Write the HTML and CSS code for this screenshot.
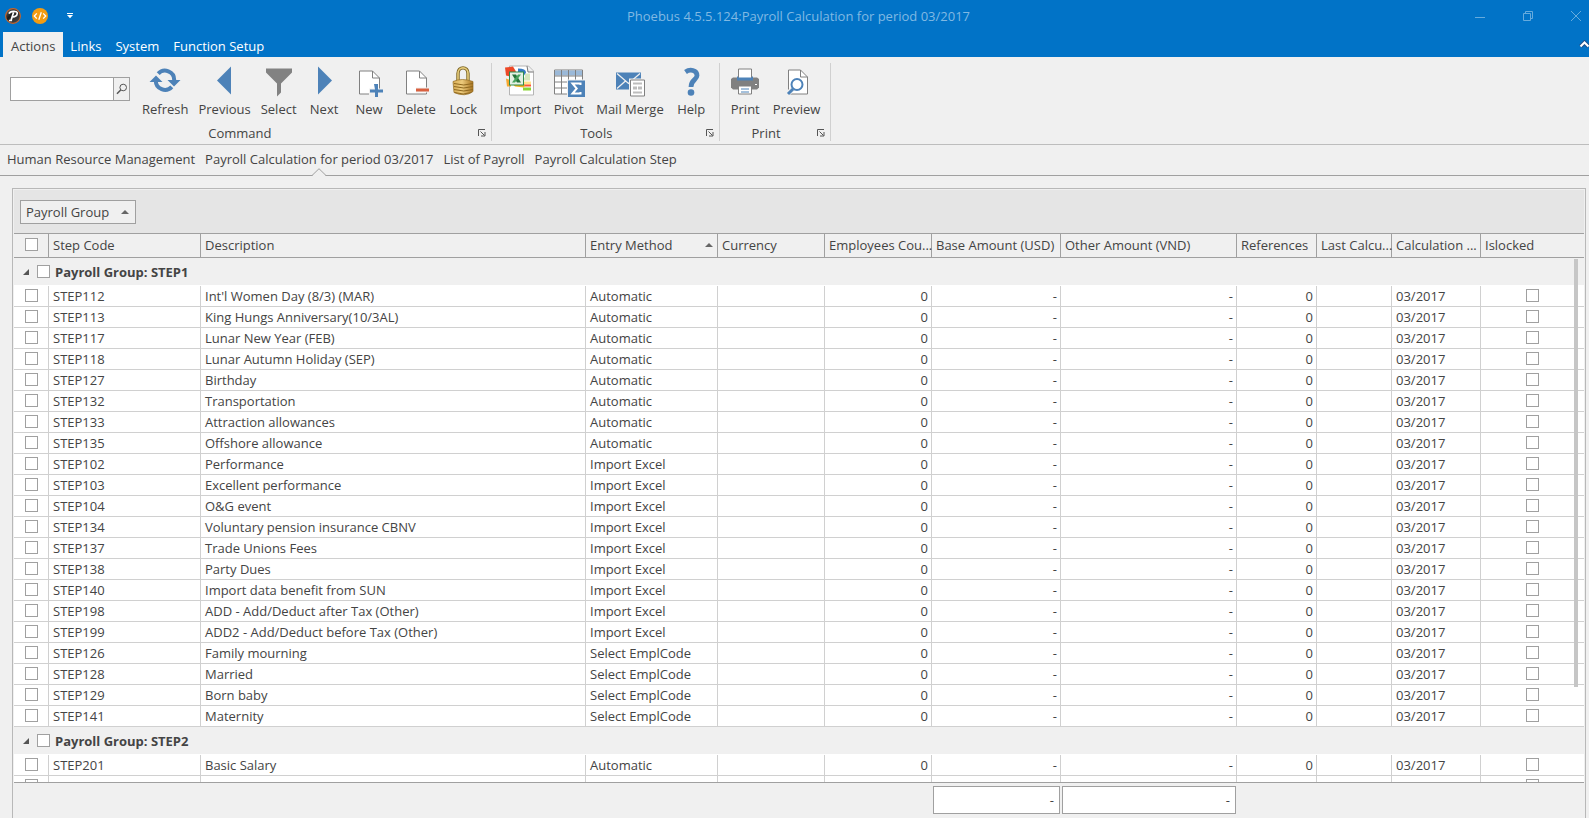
FILE: index.html
```html
<!DOCTYPE html>
<html lang="en">
<head>
<meta charset="utf-8">
<title>Phoebus 4.5.5.124:Payroll Calculation for period 03/2017</title>
<link rel="stylesheet" href="styles.css">
</head>
<body>
<header class="titlebar">
  <div class="quick">
    <button class="bare" aria-label="Phoebus">
      <svg width="16" height="16" viewBox="0 0 16 16"><defs><linearGradient id="ball" x1="0" y1="0" x2="1" y2="1"><stop offset="0" stop-color="#777"/><stop offset=".4" stop-color="#1c1c1c"/><stop offset="1" stop-color="#555"/></linearGradient></defs><circle cx="8" cy="8" r="7.4" fill="url(#ball)" stroke="#c9662c" stroke-width="1.1"/><path d="M4 5.6C5 3.2 12.500 2.200 12.300 5.300C12.100 8.400 9 9.300 7.400 8.500M8.600 4.200L6 12.400M3.900 12.500h3.200" fill="none" stroke="#fff" stroke-width="1.700"/></svg>
    </button>
    <button class="bare" aria-label="Developer">
      <svg width="16" height="16" viewBox="0 0 16 16"><circle cx="8" cy="8" r="8" fill="#f39c12"/><path d="M4.800 5.400L2.300 8l2.500 2.600M11.200 5.400L13.700 8l-2.500 2.600M9.300 4.200L6.800 11.800" fill="none" stroke="#fff" stroke-width="1.300"/></svg>
    </button>
    <button class="bare" aria-label="Customize toolbar">
      <svg width="16" height="16" viewBox="0 0 16 16"><path d="M5 5.500h6" stroke="#fff"/><path d="M5 7h6L8 10.200z" fill="#fff"/></svg>
    </button>
  </div>
  <h1 class="title">Phoebus 4.5.5.124:Payroll Calculation for period 03/2017</h1>
  <div class="window-buttons">
    <button class="bare" aria-label="Minimize"><svg width="12" height="12"><path d="M1 7.500h10"/></svg></button>
    <button class="bare" aria-label="Restore"><svg width="12" height="12"><path d="M1.500 3.500h7v7h-7zM3.500 3V1.500h7v7H9"/></svg></button>
    <button class="bare" aria-label="Close"><svg width="12" height="12"><path d="M1 1l10 10M11 1L1 11"/></svg></button>
  </div>
</header>
<nav class="menu">
  <button class="menu-tab active">Actions</button>
  <button class="menu-tab">Links</button>
  <button class="menu-tab">System</button>
  <button class="menu-tab">Function Setup</button>
  <button class="bare collapse" aria-label="Collapse ribbon"><svg width="10" height="9" viewBox="0 0 10 9"><path d="M1.500 6.500L5.500 2.500L9.500 6.500" fill="none" stroke="#20508a" stroke-width="4"/><path d="M1.500 6.500L5.500 2.500L9.500 6.500" fill="none" stroke="#fff" stroke-width="2"/></svg></button>
</nav>
<section class="ribbon">
  <div class="group">
    <div class="tools">
      <div class="search">
        <input type="text" aria-label="Search">
        <button aria-label="Find"><svg width="12" height="12" viewBox="0 0 12 12"><circle cx="7.200" cy="4.500" r="3.300" fill="none" stroke="#555"/><path d="M4.700 7L1 10.800" stroke="#555" stroke-width="1.500"/></svg></button>
      </div>
      <button class="tool"><svg viewBox="0 0 32 32"><g fill="none" stroke="#4d82b8" stroke-width="4"><path d="M9.200 9.200A9.200 9.200 0 0 1 25.200 15.500"/><path d="M22.800 22.300A9.200 9.200 0 0 1 6.800 16"/></g><path d="M0.500 17.500L7 11l6.500 6.500zM18.500 15.500h13L25 22z" fill="#4d82b8"/></svg><span>Refresh</span></button>
      <button class="tool"><svg viewBox="0 0 32 32"><path d="M22 2v28L8 16z" fill="#4d82b8"/></svg><span>Previous</span></button>
      <button class="tool"><svg viewBox="0 0 32 32"><path d="M3 4h26v4L18 19v9l-4 4V19L3 8z" fill="#828282"/></svg><span>Select</span></button>
      <button class="tool"><svg viewBox="0 0 32 32"><path d="M10 2v28l14-14z" fill="#4d82b8"/></svg><span>Next</span></button>
      <button class="tool"><svg viewBox="0 0 32 32"><path d="M6.500 6.500h13l7 7v16h-20z" fill="#fff" stroke="#808080"/><path d="M19.500 6.500v7h7" fill="none" stroke="#808080"/><path d="M16 24h15v8H16z" fill="#f0f0f0"/><path d="M21 19.500h4V25h5v3h-5v5h-3v-5h-5v-3h5z" fill="#4d82b8"/></svg><span>New</span></button>
      <button class="tool"><svg viewBox="0 0 32 32"><path d="M6.500 6.500h13l7 7v16h-20z" fill="#fff" stroke="#808080"/><path d="M19.500 6.500v7h7" fill="none" stroke="#808080"/><path d="M16 23h15v5H16z" fill="#f0f0f0"/><path d="M16 24h13v3H16z" fill="#d9603f"/></svg><span>Delete</span></button>
      <button class="tool"><svg viewBox="0 0 32 32"><defs><linearGradient id="brass"><stop offset="0" stop-color="#d9ae55"/><stop offset=".45" stop-color="#ecca7c"/><stop offset="1" stop-color="#a97521"/></linearGradient></defs><path d="M11 17V9C11 1.500 21 1.500 21 9V16" fill="none" stroke="#7d6523" stroke-width="3.400"/><path d="M11 17V9C11 1.500 21 1.500 21 9V16" fill="none" stroke="#e6cc7c" stroke-width="1.600"/><path d="M6 17q9-4 20 0v10q-8 6-19 1z" fill="url(#brass)" stroke="#946b21" stroke-width=".7"/><path d="M7 19q10 3 19 0M7 22q10 3 19 0M7 25q10 3 19 0M7.500 28q9 3 17 0" fill="none" stroke="#8f681f" stroke-width="1"/></svg><span>Lock</span></button>
    </div>
    <div class="caption"><span>Command</span><button class="bare launcher" aria-label="Command options"><svg width="8" height="8"><path d="M.5 7V.5H7M2.500 2.500l4 4M7 3v4H3" fill="none" stroke="#555"/></svg></button></div>
  </div>
  <div class="group">
    <div class="tools">
      <button class="tool"><svg viewBox="0 0 32 32"><path d="M4.500 1.500h19l5 5v24h-24z" fill="#fff" stroke="#b5b5b5"/><path d="M22 1.500l1 6h5.500" fill="#eee" stroke="#777"/><path d="M20 9h5v4h-5zM17 13h8v3h-8z" fill="#d7e6bd"/><path d="M18 17h8v3h-8z" fill="#ffe38a"/><path d="M18 20h8v2h-8z" fill="#ff5736"/><path d="M18 23h8v3h-8z" fill="#8bd534"/><path d="M0 3l8-1 3 5-6 5-4-1z" fill="#ed4827"/><path d="M13 4q8 0 8 4l-2 3-6-3z" fill="#357ac4"/><path d="M1 14l5 2v6H2z" fill="#f7a72e"/><path d="M8 20h12l-1 3-9-1z" fill="#f1b31f"/><rect x="4.500" y="7.500" width="14" height="13" fill="#e4f1e4" stroke="#2e8b4b"/><path d="M7 10h4l5 8h-4z" fill="#24733a"/><path d="M16 10h-3l-6 8h3z" fill="#49a45e"/></svg><span>Import</span></button>
      <button class="tool"><svg viewBox="0 0 32 32"><path d="M1.500 5.500h28v24h-28z" fill="#fff" stroke="#808080"/><path d="M2 6h27v5H2z" fill="#9bb9d8"/><path d="M1.500 11.500h28M1.500 17.500h28M1.500 23.500h28M8.500 5.500v24M15.500 5.500v24M22.500 5.500v24" stroke="#808080"/><path d="M14 15h18v17H14z" fill="#f0f0f0"/><path d="M15 16h17v17H15z" fill="#4d82b8"/><path d="M27.500 20.500V19h-8l4.200 5-4.200 5h8v-1.500" fill="none" stroke="#fff" stroke-width="2"/></svg><span>Pivot</span></button>
      <button class="tool"><svg viewBox="0 0 32 32"><path d="M2 8h25v17H2z" fill="#4d82b8"/><path d="M3 9l11.500 10L26 9M3 24l9-8M26 24l-9-8" stroke="#f0f0f0" stroke-width="1.300" fill="none"/><path d="M15 14h16v18H15z" fill="#f0f0f0"/><path d="M16.500 15.500h14v16h-14z" fill="#fff" stroke="#808080"/><path d="M19 18h9v2h-9zM19 22h4v3h-4zM24 22h4v3h-4zM19 27h9v2h-9z" fill="#bdbdbd"/></svg><span>Mail Merge</span></button>
      <button class="tool"><svg viewBox="0 0 32 32"><path d="M10.500 7.500C15 4.300 22 5.500 22 11C22 15.500 16 15 16 22.500" fill="none" stroke="#4d82b8" stroke-width="4.800"/><circle cx="16" cy="28" r="3.300" fill="#4d82b8"/></svg><span>Help</span></button>
    </div>
    <div class="caption"><span>Tools</span><button class="bare launcher" aria-label="Tools options"><svg width="8" height="8"><path d="M.5 7V.5H7M2.500 2.500l4 4M7 3v4H3" fill="none" stroke="#555"/></svg></button></div>
  </div>
  <div class="group">
    <div class="tools">
      <button class="tool"><svg viewBox="0 0 32 32"><path d="M4 13h24l2 1.500V23l-2 2H4l-2-2v-8.500z" fill="#808080"/><path d="M9.500 4.500h13v11h-13z" fill="#fff" stroke="#808080"/><path d="M8 12h1v1h14v-1h1v4H8z" fill="#4d82b8"/><path d="M9.500 21.500h13v8h-13z" fill="#fff" stroke="#808080"/><path d="M12 24.500h8M12 27.500h8" stroke="#4d82b8"/><path d="M26 20h2" stroke="#fff"/></svg><span>Print</span></button>
      <button class="tool"><svg viewBox="0 0 32 32"><path d="M7.500 5.500h12l7 7v17h-19z" fill="#fff" stroke="#808080"/><path d="M19.500 5.500v7h7" fill="none" stroke="#808080"/><path d="M5 31l8-8" stroke="#f0f0f0" stroke-width="5"/><circle cx="16" cy="20" r="5.500" fill="#fff" stroke="#4d82b8" stroke-width="2"/><path d="M12 24.500L7 29.500" stroke="#4d82b8" stroke-width="3"/></svg><span>Preview</span></button>
    </div>
    <div class="caption"><span>Print</span><button class="bare launcher" aria-label="Print options"><svg width="8" height="8"><path d="M.5 7V.5H7M2.500 2.500l4 4M7 3v4H3" fill="none" stroke="#555"/></svg></button></div>
  </div>
</section>
<nav class="documents">
  <a href="#hr">Human Resource Management</a>
  <a href="#calc" class="current">Payroll Calculation for period 03/2017<svg class="notch" width="14" height="8" viewBox="0 0 14 8"><path d="M0 8L7 1L14 8z" fill="#f0f0f0"/><path d="M0 7.500L7 .7L14 7.500" fill="none" stroke="#a0a0a0"/></svg></a>
  <a href="#list">List of Payroll</a>
  <a href="#step">Payroll Calculation Step</a>
</nav>
<main class="panel">
  <div class="group-by"><button class="group-chip">Payroll Group<svg width="8" height="4"><path d="M0 4L4 0L8 4z" fill="#666"/></svg></button></div>
  <div class="viewport">
    <table class="steps">
      <colgroup><col class="c-check"><col class="c-code"><col><col class="c-method"><col class="c-currency"><col class="c-count"><col class="c-base"><col class="c-other"><col class="c-refs"><col class="c-last"><col class="c-period"><col class="c-locked"></colgroup>
      <thead>
        <tr>
          <th><input type="checkbox" aria-label="Select all"></th><th>Step Code</th><th>Description</th>
          <th><div class="sorted">Entry Method<svg width="8" height="4"><path d="M0 4L4 0L8 4z" fill="#666"/></svg></div></th>
          <th>Currency</th><th>Employees Cou...</th><th>Base Amount (USD)</th><th>Other Amount (VND)</th><th>References</th><th>Last Calcu...</th><th>Calculation ...</th><th>Islocked</th>
        </tr>
      </thead>
      <tbody id="rows"></tbody>
    </table>
    <div class="thumb"></div>
  </div>
  <div class="totals"><output class="total base">-</output><output class="total other">-</output></div>
</main>
<script src="script.js"></script>
</body>
</html>
```
FILE: styles.css
```css
* { box-sizing: border-box; }
body {
  margin: 0;
  height: 100vh;
  display: flex;
  flex-direction: column;
  overflow: hidden;
  background: #f0f0f0;
  color: #444;
  font: 13px/20px "Open Sans", "Noto Sans", sans-serif;
}
button, input { font: inherit; color: inherit; margin: 0; }
button { padding: 0; border: 0; background: none; }
svg { display: block; flex: none; }

.titlebar {
  display: grid;
  grid-template-columns: 120px 1fr 120px;
  align-items: center;
  height: 32px;
  background: #0173c7;
}
.quick { display: flex; gap: 11px; padding-left: 5px; }
.quick .bare + .bare + .bare { margin-left: 3px; }
.title { margin: 0; padding-left: 8px; font-size: 13px; font-weight: 400; text-align: center; color: #80b9e3; white-space: nowrap; }
.window-buttons { display: flex; justify-content: flex-end; gap: 36px; padding-right: 7px; }
.window-buttons svg { fill: none; stroke: #66abdd; }

.menu { display: flex; height: 25px; padding-left: 3px; background: #0173c7; color: #fff; }
.menu-tab { padding: 4px 7px 1px; white-space: nowrap; }
.menu-tab.active { padding: 4px 8px 1px; background: #f0f0f0; color: #444; }
.collapse { margin-left: auto; }

.ribbon { display: flex; padding: 6px 0 3px; border-bottom: 1px solid #bdbdbd; }
.group { border-right: 1px solid #d0d0d0; padding: 0 5px 0 3px; }
.group:first-child { padding-left: 10px; }
.tools { display: flex; align-items: flex-start; height: 62px; padding-top: 1px; }
.search { display: flex; width: 120px; height: 24px; margin: 13px 7px 0 0; border: 1px solid #a0a0a0; }
.search input { flex: 1; min-width: 0; border: 0; padding: 0 4px; background: #fff; outline: 0; }
.search button { display: grid; place-items: center; width: 16px; border-left: 1px solid #a0a0a0; }
.tool { display: flex; flex-direction: column; align-items: center; min-width: 45px; padding: 0 5px; white-space: nowrap; }
.tool svg { width: 32px; height: 33px; margin-bottom: 2px; }
.caption { display: grid; grid-template-columns: 1fr 16px; align-items: center; height: 16px; text-align: center; line-height: 16px; }
.launcher { justify-self: end; }

.documents { display: flex; gap: 10px; height: 31px; padding: 4px 7px 6px; border-bottom: 1px solid #a0a0a0; white-space: nowrap; }
.documents a { position: relative; color: inherit; text-decoration: none; }
.notch { position: absolute; left: 50%; bottom: -7px; margin-left: -7px; }

.panel {
  flex: 1;
  min-height: 0;
  display: flex;
  flex-direction: column;
  margin: 12px 3px 0 12px;
  padding: 1px 1px 0;
  border: 1px solid #b8b8b8;
  border-bottom: 0;
}
.group-by { padding: 10px 6px 9px; background: #e5e5e5; }
.group-chip { display: flex; align-items: center; gap: 12px; height: 24px; padding: 0 6px 0 5px; border: 1px solid #a0a0a0; background: #f0f0f0; }
.viewport { position: relative; flex: 1; min-height: 0; overflow: hidden; }
.steps { width: 100%; table-layout: fixed; border-collapse: separate; border-spacing: 0; }
.c-check { width: 35px; }
.c-code { width: 152px; }
.c-method { width: 132px; }
.c-currency, .c-count { width: 107px; }
.c-base { width: 129px; }
.c-other { width: 176px; }
.c-refs { width: 80px; }
.c-last { width: 75px; }
.c-period { width: 89px; }
.c-locked { width: 103px; }
.steps th {
  height: 25px;
  padding: 0 0 2px 4px;
  border: solid #a0a0a0;
  border-width: 1px 1px 1px 0;
  font-weight: 400;
  text-align: left;
  white-space: nowrap;
}
.steps td {
  height: 21px;
  padding: 0 3px 0 4px;
  border: solid #d0d0d0;
  border-width: 0 1px 1px 0;
  background: #fff;
  line-height: 20px;
  white-space: nowrap;
}
.steps th:first-child { padding-right: 3px; }
.steps th:last-child, .steps td:last-child { border-right: 0; }
.steps td:last-child { padding-right: 4px; }
.steps .num { text-align: right; }
.steps .section { height: 28px; padding: 0 9px; border: 0; border-bottom: 1px solid #fff; background: #f0f0f0; font-weight: 700; }
.section label { display: flex; align-items: center; }
.section label input { margin: 0 5px 0 8px; }
.sorted { display: flex; align-items: center; justify-content: space-between; padding-right: 4px; line-height: 20px; }
input[type="checkbox"] { appearance: none; display: block; width: 13px; height: 13px; margin: 0 auto; border: 1px solid #a0a0a0; background: #fff; }
.steps td > input[type="checkbox"] { margin-bottom: 1px; }
.thumb { position: absolute; top: 26px; right: 6px; width: 4px; height: 78%; background: #c6c6c6; }
.totals { display: flex; justify-content: flex-end; gap: 2px; height: 36px; padding: 3px 348px 4px 0; border-top: 1px solid #a0a0a0; }
.total { height: 28px; padding: 3px 5px; border: 1px solid #a0a0a0; background: #fff; text-align: right; }
.total.base { width: 127px; }
.total.other { width: 174px; }
```
FILE: script.js
```javascript
const groups = [
  ["STEP1", [
    ["STEP112", "Int'l Women Day (8/3) (MAR)", "Automatic"],
    ["STEP113", "King Hungs Anniversary(10/3AL)", "Automatic"],
    ["STEP117", "Lunar New Year (FEB)", "Automatic"],
    ["STEP118", "Lunar Autumn Holiday (SEP)", "Automatic"],
    ["STEP127", "Birthday", "Automatic"],
    ["STEP132", "Transportation", "Automatic"],
    ["STEP133", "Attraction allowances", "Automatic"],
    ["STEP135", "Offshore allowance", "Automatic"],
    ["STEP102", "Performance", "Import Excel"],
    ["STEP103", "Excellent performance", "Import Excel"],
    ["STEP104", "O&G event", "Import Excel"],
    ["STEP134", "Voluntary pension insurance CBNV", "Import Excel"],
    ["STEP137", "Trade Unions Fees", "Import Excel"],
    ["STEP138", "Party Dues", "Import Excel"],
    ["STEP140", "Import data benefit from SUN", "Import Excel"],
    ["STEP198", "ADD - Add/Deduct after Tax (Other)", "Import Excel"],
    ["STEP199", "ADD2 - Add/Deduct before Tax (Other)", "Import Excel"],
    ["STEP126", "Family mourning", "Select EmplCode"],
    ["STEP128", "Married", "Select EmplCode"],
    ["STEP129", "Born baby", "Select EmplCode"],
    ["STEP141", "Maternity", "Select EmplCode"]
  ]],
  ["STEP2", [
    ["STEP201", "Basic Salary", "Automatic"],
    ["", "", ""]
  ]]
];

const body = document.getElementById("rows");

function addCell(row, text, className) {
  const cell = row.insertCell();
  cell.textContent = text;
  if (className) cell.className = className;
}

function addCheck(row, label) {
  const box = document.createElement("input");
  box.type = "checkbox";
  box.setAttribute("aria-label", label);
  row.insertCell().append(box);
}

for (const [name, steps] of groups) {
  const section = body.insertRow().insertCell();
  section.colSpan = 12;
  section.className = "section";
  section.innerHTML = `<label><svg width="6" height="6"><path d="M6 0v6H0z" fill="#555"/></svg><input type="checkbox">Payroll Group: ${name}</label>`;
  for (const [code, description, method] of steps) {
    const row = body.insertRow();
    addCheck(row, `Select ${code}`);
    addCell(row, code);
    addCell(row, description);
    addCell(row, method);
    addCell(row, "");
    addCell(row, code && "0", "num");
    addCell(row, code && "-", "num");
    addCell(row, code && "-", "num");
    addCell(row, code && "0", "num");
    addCell(row, "");
    addCell(row, code && "03/2017");
    addCheck(row, `${code} locked`);
  }
}
```
